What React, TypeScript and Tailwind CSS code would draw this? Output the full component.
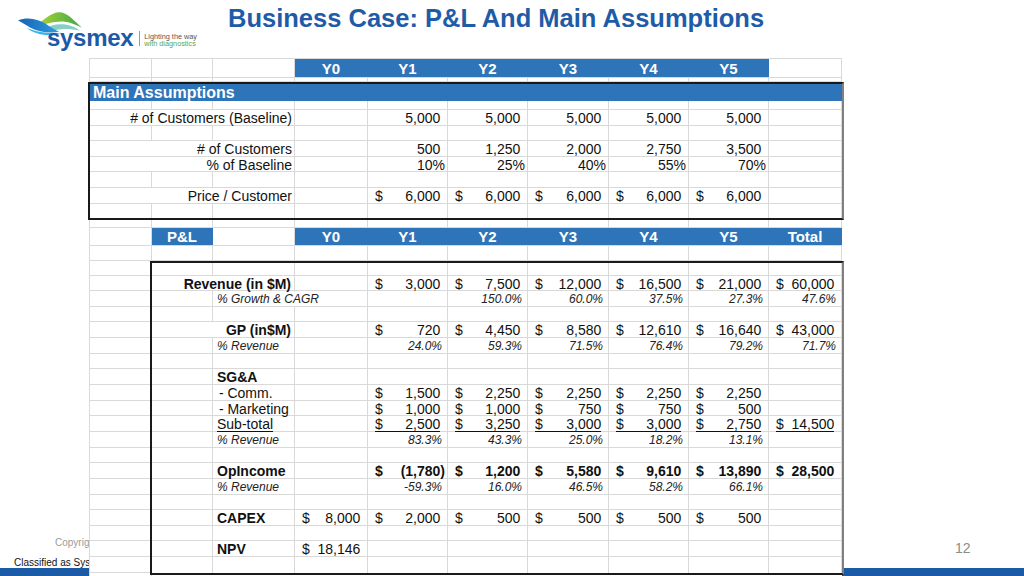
import React from "react";

const GRID_FULL = "grid grid-cols-[62px_61px_82px_73px_80px_80px_81px_80px_80px_73px]";
const GRID_BOX = "grid grid-cols-[61px_82px_73px_80px_80px_81px_80px_80px_73px]";
const BLUE = "bg-[#2e74b8] border-r-[#2e74b8] text-white font-bold text-[15px] justify-center";
const ITAL = "italic text-[12px] text-[#222]";

function Cell({ cls = "", children }: { cls?: string; children?: React.ReactNode }) {
  return (
    <div className={`flex items-center pt-px whitespace-nowrap border-r border-[#d9d9d9] ${cls}`}>{children}</div>
  );
}

function Row({ grid, h, last, children }: { grid: string; h: string; last?: boolean; children?: React.ReactNode }) {
  return <div className={`${grid} ${h} ${last ? "" : "border-b border-[#d9d9d9]"}`}>{children}</div>;
}

function Empty({ n }: { n: number }) {
  return (
    <>
      {Array.from({ length: n }).map((_, i) => (
        <Cell key={i} />
      ))}
    </>
  );
}

function Acc({ v, b, u }: { v: string; b?: boolean; u?: boolean }) {
  const neg = v.startsWith("(");
  return (
    <Cell cls={`pl-[7px] pr-[2px] ${b ? "font-bold" : ""}`}>
      <div className={`flex flex-1 justify-between ${u ? "border-b border-[#111] leading-[13px]" : ""}`}>
        <span>$</span>
        <span>{v}</span>
      </div>
      {!neg && <span className="invisible">)</span>}
    </Cell>
  );
}

function Num({ v }: { v: string }) {
  return (
    <Cell cls="justify-end pr-[2px]">
      {v}
      <span className="invisible">)</span>
    </Cell>
  );
}

function Pct({ v }: { v: string }) {
  return <Cell cls="justify-end pr-[2px]">{v}</Cell>;
}

function PctI({ v }: { v: string }) {
  return <Cell cls={`justify-end pr-[5px] ${ITAL}`}>{v}</Cell>;
}

function Logo() {
  return (
    <div className="w-[228px] shrink-0 pl-[16px] pt-[10px] flex flex-col">
      <svg width="68" height="25" viewBox="0 0 66 24">
        <defs>
          <linearGradient id="gG" x1="0" y1="0" x2="1" y2="0">
            <stop offset="0" stopColor="#b8d432" />
            <stop offset="1" stopColor="#3aa94a" />
          </linearGradient>
          <linearGradient id="gB" x1="0" y1="0" x2="1" y2="0">
            <stop offset="0" stopColor="#1563b3" />
            <stop offset="1" stopColor="#2e9de0" />
          </linearGradient>
        </defs>
        <path d="M24 19 C32 15 40 13 48 14 C54 15 58 17 62 20 C54 18 46 18 40 19 C34 20 30 20 24 19 Z" fill="#86cfc4" />
        <path d="M18 16 C26 10 34 2 42 2 C50 2 56 10 64 17 C56 13 50 11 44 11 C36 11 28 14 18 16 Z" fill="url(#gG)" />
        <path d="M10 17 C20 21 30 23 44 22 C34 26 20 25 10 17 Z" fill="#3cb6e8" />
        <path d="M2 10 C12 6 22 9 30 14 C34 17 38 19 42 21 C32 23 22 21 14 17 C9 14 6 12 2 10 Z" fill="url(#gB)" />
      </svg>
      <div className="flex items-center -mt-[6px] pl-[31px]">
        <span className="text-[24px] leading-[18px] font-bold text-[#1b5aa8] tracking-[-0.3px]">sysmex</span>
        <div className="ml-[6px] w-px h-[15px] bg-[#9a9a9a]" />
        <div className="ml-[4px] flex flex-col text-[7.3px] leading-[7px] mt-[3px]">
          <span className="text-[#555]">Lighting the way</span>
          <span className="text-[#5aa845]">with diagnostics</span>
        </div>
      </div>
    </div>
  );
}

export default function App() {
  const rev = ["3,000", "7,500", "12,000", "16,500", "21,000"];
  const growth = ["150.0%", "60.0%", "37.5%", "27.3%"];
  const gp = ["720", "4,450", "8,580", "12,610", "16,640"];
  const gpPct = ["24.0%", "59.3%", "71.5%", "76.4%", "79.2%"];
  const comm = ["1,500", "2,250", "2,250", "2,250", "2,250"];
  const mkt = ["1,000", "1,000", "750", "750", "500"];
  const sub = ["2,500", "3,250", "3,000", "3,000", "2,750"];
  const subPct = ["83.3%", "43.3%", "25.0%", "18.2%", "13.1%"];
  const op = ["(1,780)", "1,200", "5,580", "9,610", "13,890"];
  const opPct = ["-59.3%", "16.0%", "46.5%", "58.2%", "66.1%"];
  const capex = ["2,000", "500", "500", "500", "500"];
  const years = ["Y0", "Y1", "Y2", "Y3", "Y4", "Y5"];

  return (
    <div className="relative w-[1024px] h-[576px] overflow-hidden bg-white font-['Liberation_Sans',Arial,sans-serif]">
      {/* slide footer (partly hidden behind the pasted sheet) */}
      <div className="absolute left-0 right-0 bottom-0 h-[8px] bg-[#1b5aa6]" />
      <div className="absolute left-[55px] top-[535px] text-[10px] text-[#9a9a9a] whitespace-nowrap">
        Copyright © Sysmex Corporation
      </div>
      <div className="absolute left-[14px] top-[555px] text-[10px] text-[#111] whitespace-nowrap">
        Classified as Sysmex Internal
      </div>
      <div className="absolute left-[955px] top-[538px] text-[14px] text-[#8c8c8c]">12</div>

      {/* header */}
      <div className="flex h-[58px]">
        <Logo />
        <div className="mt-[6px] text-[25.5px] leading-[25px] font-bold text-[#1f5ca8] whitespace-nowrap">
          Business Case: P&amp;L And Main Assumptions
        </div>
      </div>

      {/* spreadsheet */}
      <div className="relative z-10 ml-[89px] w-[753px] border-l border-t border-[#d9d9d9] bg-white text-[14px] leading-[15px] text-[#111]">
        <Row grid={GRID_FULL} h="h-[19px]">
          <Empty n={3} />
          {years.map((y) => (
            <Cell key={y} cls={BLUE}>
              {y}
            </Cell>
          ))}
          <Cell />
        </Row>
        <Row grid={GRID_FULL} h="h-[4px]">
          <Empty n={10} />
        </Row>

        {/* Main assumptions box */}
        <div className="-ml-[2px] box-content w-[752px] border-2 border-[#1a1a1a] border-r-[#808080]">
          <div className="h-[17px] bg-[#2e74b8] text-white font-bold text-[16px] leading-[17px] pl-[3px]">
            Main Assumptions
          </div>
          <Row grid={GRID_FULL} h="h-[9px]">
            <Empty n={10} />
          </Row>
          <Row grid={GRID_FULL} h="h-[15.6px]">
            <Cell cls="col-span-3 justify-end pr-[2px]"># of Customers (Baseline)</Cell>
            <Cell />
            {["5,000", "5,000", "5,000", "5,000", "5,000"].map((v, i) => (
              <Num key={i} v={v} />
            ))}
            <Cell />
          </Row>
          <Row grid={GRID_FULL} h="h-[15.6px]">
            <Empty n={10} />
          </Row>
          <Row grid={GRID_FULL} h="h-[15.6px]">
            <Cell cls="col-span-3 justify-end pr-[2px]"># of Customers</Cell>
            <Cell />
            {["500", "1,250", "2,000", "2,750", "3,500"].map((v, i) => (
              <Num key={i} v={v} />
            ))}
            <Cell />
          </Row>
          <Row grid={GRID_FULL} h="h-[15.6px]">
            <Cell cls="col-span-3 justify-end pr-[2px]">% of Baseline</Cell>
            <Cell />
            {["10%", "25%", "40%", "55%", "70%"].map((v, i) => (
              <Pct key={i} v={v} />
            ))}
            <Cell />
          </Row>
          <Row grid={GRID_FULL} h="h-[15.6px]">
            <Empty n={10} />
          </Row>
          <Row grid={GRID_FULL} h="h-[15.6px]">
            <Cell cls="col-span-3 justify-end pr-[2px]">Price / Customer</Cell>
            <Cell />
            {["6,000", "6,000", "6,000", "6,000", "6,000"].map((v, i) => (
              <Acc key={i} v={v} />
            ))}
            <Cell />
          </Row>
          <Row grid={GRID_FULL} h="h-[14px]" last>
            <Empty n={10} />
          </Row>
        </div>

        <Row grid={GRID_FULL} h="h-[8px]">
          <Empty n={10} />
        </Row>
        <Row grid={GRID_FULL} h="h-[18px]">
          <Cell />
          <Cell cls={BLUE}>{"P&L"}</Cell>
          <Cell />
          {years.map((y) => (
            <Cell key={y} cls={BLUE}>
              {y}
            </Cell>
          ))}
          <Cell cls={BLUE}>Total</Cell>
        </Row>
        <Row grid={GRID_FULL} h="h-[15px]">
          <Empty n={10} />
        </Row>

        {/* P&L box */}
        <div className="flex items-start">
          <div className="w-[62px] shrink-0">
            <div className="h-[15px] border-b border-r border-[#d9d9d9]" />
            {Array.from({ length: 20 }).map((_, i) => (
              <div key={i} className="h-[15.65px] border-b border-r border-[#d9d9d9]" />
            ))}
          </div>
          <div className="-ml-[2px] box-content w-[690px] border-2 border-[#1a1a1a] border-r-[#808080]">
            <Row grid={GRID_BOX} h="h-[13px]">
              <Empty n={9} />
            </Row>
            {/* Revenue */}
            <Row grid={GRID_BOX} h="h-[15.65px]">
              <Cell cls="col-span-2 justify-end pr-[3px] font-bold">Revenue (in $M)</Cell>
              <Cell />
              {rev.map((v, i) => (
                <Acc key={i} v={v} />
              ))}
              <Acc v="60,000" />
            </Row>
            <Row grid={GRID_BOX} h="h-[15.65px]">
              <Cell />
              <Cell cls={`col-span-2 pl-[4px] ${ITAL}`}>% Growth &amp; CAGR</Cell>
              <Cell />
              {growth.map((v, i) => (
                <PctI key={i} v={v} />
              ))}
              <PctI v="47.6%" />
            </Row>
            <Row grid={GRID_BOX} h="h-[15.65px]">
              <Empty n={9} />
            </Row>
            {/* GP */}
            <Row grid={GRID_BOX} h="h-[15.65px]">
              <Cell cls="col-span-2 justify-end pr-[3px] font-bold">GP (in$M)</Cell>
              <Cell />
              {gp.map((v, i) => (
                <Acc key={i} v={v} />
              ))}
              <Acc v="43,000" />
            </Row>
            <Row grid={GRID_BOX} h="h-[15.65px]">
              <Cell />
              <Cell cls={`pl-[4px] ${ITAL}`}>% Revenue</Cell>
              <Cell />
              {gpPct.map((v, i) => (
                <PctI key={i} v={v} />
              ))}
              <PctI v="71.7%" />
            </Row>
            <Row grid={GRID_BOX} h="h-[15.65px]">
              <Empty n={9} />
            </Row>
            {/* SG&A */}
            <Row grid={GRID_BOX} h="h-[15.65px]">
              <Cell />
              <Cell cls="pl-[4px] font-bold">{"SG&A"}</Cell>
              <Empty n={7} />
            </Row>
            <Row grid={GRID_BOX} h="h-[15.65px]">
              <Cell />
              <Cell cls="pl-[2px] whitespace-pre">{" - Comm."}</Cell>
              <Cell />
              {comm.map((v, i) => (
                <Acc key={i} v={v} />
              ))}
              <Cell />
            </Row>
            <Row grid={GRID_BOX} h="h-[15.65px]">
              <Cell />
              <Cell cls="pl-[2px] whitespace-pre">{" - Marketing"}</Cell>
              <Cell />
              {mkt.map((v, i) => (
                <Acc key={i} v={v} />
              ))}
              <Cell />
            </Row>
            <Row grid={GRID_BOX} h="h-[15.65px]">
              <Cell />
              <Cell cls="pl-[4px]">
                <span className="underline underline-offset-2">Sub-total</span>
              </Cell>
              <Cell />
              {sub.map((v, i) => (
                <Acc key={i} v={v} u />
              ))}
              <Acc v="14,500" u />
            </Row>
            <Row grid={GRID_BOX} h="h-[15.65px]">
              <Cell />
              <Cell cls={`pl-[4px] ${ITAL}`}>% Revenue</Cell>
              <Cell />
              {subPct.map((v, i) => (
                <PctI key={i} v={v} />
              ))}
              <Cell />
            </Row>
            <Row grid={GRID_BOX} h="h-[15.65px]">
              <Empty n={9} />
            </Row>
            {/* OpIncome */}
            <Row grid={GRID_BOX} h="h-[15.65px]">
              <Cell />
              <Cell cls="pl-[4px] font-bold">OpIncome</Cell>
              <Cell />
              {op.map((v, i) => (
                <Acc key={i} v={v} b />
              ))}
              <Acc v="28,500" b />
            </Row>
            <Row grid={GRID_BOX} h="h-[15.65px]">
              <Cell />
              <Cell cls={`pl-[4px] ${ITAL}`}>% Revenue</Cell>
              <Cell />
              {opPct.map((v, i) => (
                <PctI key={i} v={v} />
              ))}
              <Cell />
            </Row>
            <Row grid={GRID_BOX} h="h-[15.65px]">
              <Empty n={9} />
            </Row>
            {/* CAPEX */}
            <Row grid={GRID_BOX} h="h-[15.65px]">
              <Cell />
              <Cell cls="pl-[4px] font-bold">CAPEX</Cell>
              <Acc v="8,000" />
              {capex.map((v, i) => (
                <Acc key={i} v={v} />
              ))}
              <Cell />
            </Row>
            <Row grid={GRID_BOX} h="h-[15.65px]">
              <Empty n={9} />
            </Row>
            {/* NPV */}
            <Row grid={GRID_BOX} h="h-[15.65px]">
              <Cell />
              <Cell cls="pl-[4px] font-bold">NPV</Cell>
              <Acc v="18,146" />
              <Empty n={6} />
            </Row>
            <Row grid={GRID_BOX} h="h-[15.65px]" last>
              <Empty n={9} />
            </Row>
          </div>
        </div>
      </div>
    </div>
  );
}
